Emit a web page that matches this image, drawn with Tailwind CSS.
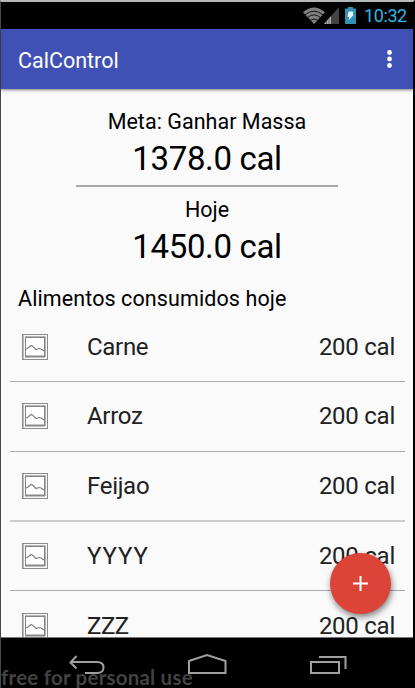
<!DOCTYPE html>
<html lang="pt">
<head>
<meta charset="utf-8">
<title>CalControl</title>
<script src="https://cdn.jsdelivr.net/npm/@tailwindcss/browser@4"></script>
</head>
<body class="w-[415px] h-[688px] overflow-hidden bg-black font-['Roboto',sans-serif]">
<svg class="hidden">
  <symbol id="pic" viewBox="0 0 26 26">
    <rect x="0.5" y="0.5" width="25" height="25" fill="#f8f8f8" stroke="#8c8c8c"/>
    <path d="M1.5 1v24" stroke="#bbb"/>
    <path d="M3 2.5h20.5M23.5 3v20" stroke="#b5b5b5" fill="none"/>
    <rect x="3.5" y="3.5" width="19" height="19" fill="#fff" stroke="#858585"/>
    <path d="M3 22.5h20" stroke="#888" stroke-width="2"/>
    <path d="M4 15l2-1 3-2.500 2 1 3 3 3-1 2 .5 3 2" stroke="#808080" stroke-width="1.200" fill="none"/>
  </symbol>
</svg>
<div class="relative h-[688px] flex flex-col border-t-2 border-t-[#b4b9b8] border-l border-l-[#434a4e] border-r-2 border-r-black">
  <div class="h-[27px] shrink-0 bg-black flex items-center justify-end pr-[6px]">
    <svg class="w-[22px] h-[17px] mr-px" viewBox="0 0 22 17"><path d="M0 5.2Q11-4.2 22 5.2L11 17Z" fill="#808080"/><path d="M2 7.8Q11 .5 20 7.8M4.5 10.5Q11 5.3 17.5 10.5M7.2 13.3Q11 10.4 14.8 13.3" stroke="#141414" stroke-width="1" fill="none"/></svg>
    <svg class="w-[15px] h-[17px] mr-[6px] -ml-[2px]" viewBox="0 0 15 17"><path d="M15 0V17H0Z" fill="#444"/><path d="M0 17L7 9V17Z" fill="#aaa"/><path d="M2.5 14v3M5 11v6" stroke="#555" stroke-width=".7"/></svg>
    <svg class="w-[11px] h-[17px] mr-[8px]" viewBox="0 0 11 17"><path d="M0 1.5H3V0H8V1.5H11V17H0Z" fill="#3190b5"/><path d="M3.5 4.5h4.5v3.5l1-.5-5.5 6 .8-3.8-1.8.2z" fill="#e8f5fa"/></svg>
    <span class="w-[43px] text-[18px] leading-[27px] text-[#33b5e5] whitespace-nowrap tracking-[-0.4px]">10:32</span>
  </div>
  <div class="h-[60px] shrink-0 bg-[#3f51b5] flex items-center justify-between pl-[17px] pr-[21px] shadow-[0_1px_3px_rgba(0,0,0,0.5)] z-10">
    <h1 class="text-[21.5px] leading-[30px] text-white pt-[3px]">CalControl</h1>
    <svg class="w-[5px] h-[18px]" viewBox="0 0 5 18" fill="#fff"><circle cx="2.5" cy="2.5" r="2.4"/><circle cx="2.5" cy="9" r="2.4"/><circle cx="2.5" cy="15.5" r="2.4"/></svg>
  </div>
  <main class="h-[548px] shrink-0 bg-[#fafafa] overflow-hidden text-black">
    <section class="flex flex-col items-center pt-[18px]">
      <p class="text-[21.5px] leading-[30px] tracking-[0.03px]">Meta: Ganhar Massa</p>
      <p class="text-[33px] leading-[42px] pt-px tracking-[-0.35px]">1378.0 cal</p>
      <div class="w-[262px] h-[2px] mt-[5px] bg-[#a9a9a9]"></div>
      <p class="text-[21.5px] leading-[30px] mt-[8px]">Hoje</p>
      <p class="text-[33px] leading-[42px] pt-px tracking-[-0.35px]">1450.0 cal</p>
    </section>
    <h2 class="text-[21.5px] leading-[30px] pl-[17px] mt-[16px] tracking-[0.1px]">Alimentos consumidos hoje</h2>
    <ul class="px-[9px] pr-[8px] text-[24px] leading-[22px] text-[#212121]">
      <li class="h-[68px] flex items-center pl-[12px] pr-[10px] pb-[2px] border-b border-[#aaa]"><svg class="w-[26px] h-[26px] mr-[39px]"><use href="#pic"/></svg><span class="flex-1 tracking-[-0.3px]">Carne</span><span class="tracking-[-0.25px]">200 cal</span></li>
      <li class="h-[70px] flex items-center pl-[12px] pr-[10px] pb-px border-b border-[#aaa]"><svg class="w-[26px] h-[26px] mr-[39px]"><use href="#pic"/></svg><span class="flex-1 tracking-[-0.3px]">Arroz</span><span class="tracking-[-0.25px]">200 cal</span></li>
      <li class="h-[70px] flex items-center pl-[12px] pr-[10px] border-b-2 border-[#ccc]"><svg class="w-[26px] h-[26px] mr-[39px]"><use href="#pic"/></svg><span class="flex-1 tracking-[-0.3px]">Feijao</span><span class="tracking-[-0.25px]">200 cal</span></li>
      <li class="h-[69px] flex items-center pl-[12px] pr-[10px] border-b border-[#aaa]"><svg class="w-[26px] h-[26px] mr-[39px]"><use href="#pic"/></svg><span class="flex-1 tracking-[0.9px]">YYYY</span><span class="tracking-[-0.25px]">200 cal</span></li>
      <li class="h-[70px] flex items-center pl-[12px] pr-[10px]"><svg class="w-[26px] h-[26px] mr-[39px]"><use href="#pic"/></svg><span class="flex-1 tracking-[-0.5px]">ZZZ</span><span class="tracking-[-0.25px]">200 cal</span></li>
    </ul>
  </main>
  <button class="absolute left-[329px] top-[551px] size-[61px] rounded-full bg-[#db4437] flex items-center justify-center shadow-[1px_3px_6px_rgba(0,0,0,0.5)]" aria-label="Adicionar">
    <svg class="size-[15px]" viewBox="0 0 15 15"><path d="M7.5 0V15M0 7.5H15" stroke="#fff" stroke-width="2"/></svg>
  </button>
  <nav class="relative h-[51px] shrink-0 bg-black border-t border-[#777]">
    <svg class="w-[412px] h-[50px]" viewBox="1 638 412 50" fill="none" stroke="#a0a0a0" stroke-width="2">
      <path d="M76.500 656L70.500 662.500L76.500 668.500M71 662H97Q103.500 662 103.500 667.500Q103.500 673 97 673H85"/>
      <path d="M189 673V661L207 655L225.500 661V673Z"/>
      <path d="M311 662H339V673H311ZM319 657H345.500V669"/>
    </svg>
    <span class="absolute left-0 top-[27px] font-['Lato',sans-serif] text-[20.5px] leading-[24px] font-bold tracking-[0.22px] text-[#484848]/95 whitespace-nowrap">free for personal use</span>
  </nav>
</div>
</body>
</html>
